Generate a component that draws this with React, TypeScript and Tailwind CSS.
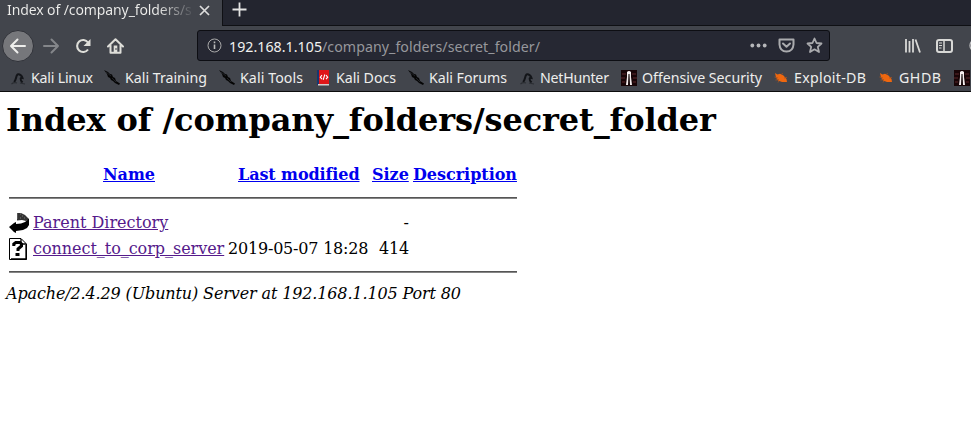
import React from "react";

const Kali = () => (
  <svg className="shrink-0" width="16" height="16" viewBox="0 0 16 16" fill="none">
    <path d="M4 12C6.5 10 5.5 6.5 7.5 4.5C9.5 3.5 12 6 12.5 8C10.5 7.5 9.5 9 12.5 12.5" stroke="#131519" strokeWidth="2" />
    <path d="M1.5 14Q4 12 7 13M10 13L15 14" stroke="#2a2d32" strokeWidth="1.2" />
  </svg>
);

const Knife = () => (
  <svg className="shrink-0" width="16" height="16" viewBox="0 0 16 16">
    <path d="M0 0L4 2L6 4L8 4.5L9 7L11 8L12 11L16 13.5L15 15L11 13L9 11L7 10L6 8L4 7L3 4Z" fill="#050505" />
    <path d="M2 2L7 6M8 8L12 12" stroke="#30343a" strokeWidth=".6" />
  </svg>
);

const Book = () => (
  <svg className="shrink-0" width="16" height="16" viewBox="0 0 16 16">
    <path d="M2 0H4V15H2Z" fill="#17366f" />
    <path d="M4 0H14V14H4Z" fill="#df1618" />
    <path d="M3 14H14V15.5H3Z" fill="#d3cccc" />
    <path d="M7 5.2L5.3 7.2L7 9.2M11 5.2L12.7 7.2L11 9.2M9.8 4.5L8.2 9.8" stroke="white" strokeWidth="1.1" fill="none" />
  </svg>
);

const Security = () => (
  <svg className="shrink-0" width="16" height="16" viewBox="0 0 16 16">
    <path d="M0 0H16V16H0Z" fill="#180507" />
    <path d="M1 4H5M11 4H15M0 8H4M12 8H16M1 12H4M12 12H15" stroke="#5c282c" strokeWidth="1" />
    <path d="M6 2Q8 0 10 2V7L11 15H9L8 4L7 15H5L6 7Z" fill="#f5eeee" />
    <path d="M8 4V15" stroke="#080000" strokeWidth="1" />
  </svg>
);

const Bug = () => (
  <svg className="shrink-0" width="16" height="16" viewBox="0 0 16 16">
    <path d="M2 3L4.5 4.5L7 3.8L10.5 5.5L13.5 9L14 12L9 12L5 10.5L3 7.5Z" fill="#ee670f" />
    <path d="M1.5 7L5 8M2.5 10L6 9.5M8 4.5L10 3.5M6 11L5 12.5M11 8L14 7.5" stroke="#a9531f" strokeWidth=".8" />
  </svg>
);

const bookmarks = [
  { label: "Kali Linux", icon: Kali, box: "w-[94px]", length: 62 },
  { label: "Kali Training", icon: Knife, box: "w-[115px]", length: 82 },
  { label: "Kali Tools", icon: Knife, box: "w-[96px]", length: 63 },
  { label: "Kali Docs", icon: Book, box: "w-[93px]", length: 60 },
  { label: "Kali Forums", icon: Knife, box: "w-[111px]", length: 78 },
  { label: "NetHunter", icon: Kali, box: "w-[102px]", length: 69 },
  { label: "Offensive Security", icon: Security, box: "w-[152px]", length: 120 },
  { label: "Exploit-DB", icon: Bug, box: "w-[105px]", length: 72 },
  { label: "GHDB", icon: Bug, box: "w-[76px]", length: 42 },
];

function Browser() {
  return (
    <header className="h-[92px] overflow-hidden border-b border-[#0c0c0d] bg-[#42454c] font-['Noto_Sans',sans-serif] text-[14.2px] text-[#eeeeec]">
      <div className="flex h-[26px]">
        <div className="flex h-[26px] w-[222px] shrink-0">
          <div className="ml-[7px] h-5 w-[186px] shrink-0 whitespace-nowrap bg-[linear-gradient(90deg,#eeeeec_0,#eeeeec_150px,#42454c_188px)] bg-clip-text text-[14px] leading-5 tracking-[-0.1px] text-transparent">Index of /company_folders/s</div>
          <svg className="ml-[6px] mt-[5px] shrink-0" width="11" height="11" viewBox="0 0 11 11"><path d="M1 1L10 10M10 1L1 10" stroke="#dddddc" strokeWidth="1.7" /></svg>
        </div>
        <div className="flex-1 border-b border-l border-[#0f1014] bg-[#23252f] pl-[9px] pt-[2px]">
          <svg width="15" height="15" viewBox="0 0 15 15"><path d="M7.5 .5V14.5M.5 7.5H14.5" stroke="#e4e4e3" strokeWidth="1.8" /></svg>
        </div>
      </div>
      <div className="flex h-[39px] items-center">
        <div className="ml-[2px] flex size-8 shrink-0 items-center justify-center rounded-full border border-[#303239] bg-[#76777b]">
          <svg width="18" height="18" viewBox="0 0 18 18" fill="none"><path d="M16 9H2M8.5 2.5L2 9L8.5 15.5" stroke="#eeeeec" strokeWidth="2" strokeLinecap="round" strokeLinejoin="round" /></svg>
        </div>
        <svg className="ml-[8px] shrink-0" width="18" height="18" viewBox="0 0 18 18" fill="none"><path d="M2 9H16M9.5 2.5L16 9L9.5 15.5" stroke="#84868a" strokeWidth="2" strokeLinecap="round" strokeLinejoin="round" /></svg>
        <svg className="ml-[15px] shrink-0" width="16" height="16" viewBox="0 0 16 16" fill="none"><path d="M13 4.5A6 6 0 1 0 13 11.5" stroke="#deded9" strokeWidth="2.1" /><path d="M15.5 1V8H8.5Z" fill="#deded9" /></svg>
        <svg className="ml-[16px] shrink-0" width="17" height="16" viewBox="0 0 17 16" fill="none"><path d="M1 8.5L8.5 1.3L16 8.5M3.5 7.5V14.8H13.5V7.5" stroke="#deded9" strokeWidth="2" strokeLinecap="round" strokeLinejoin="round" /><path d="M6.7 7.5H10.3V14H6.7Z" fill="#deded9" /><path d="M9 10V12" stroke="#42454c" /></svg>
        <div className="ml-[73px] flex h-[31px] w-[633px] shrink-0 items-center rounded-[3px] border border-[#0d0e13] bg-[#262833] pl-[9px]">
          <svg className="shrink-0" width="15" height="15" viewBox="0 0 15 15" fill="none"><circle cx="7.5" cy="7.5" r="6.5" stroke="#aaa" strokeWidth="1" /><path d="M7.5 6.5V11M7.5 3.5V5.3" stroke="#bbb" strokeWidth="1.6" /></svg>
          <svg className="ml-[7px] shrink-0 overflow-visible" width="312" height="24"><text x="0" y="18" fill="#f1f1ef" textLength="93" lengthAdjust="spacing">192.168.1.105</text><text x="93" y="18" fill="#96979c" textLength="218" lengthAdjust="spacing">/company_folders/secret_folder/</text></svg>
          <svg className="ml-[209px] shrink-0" width="17" height="5" fill="#b6b7ba"><circle cx="2.3" cy="2.5" r="1.9" /><circle cx="8.5" cy="2.5" r="1.9" /><circle cx="14.7" cy="2.5" r="1.9" /></svg>
          <svg className="ml-[11px] shrink-0" width="17" height="15" viewBox="0 0 17 15" fill="none" stroke="#aaabae" strokeWidth="2" strokeLinecap="round" strokeLinejoin="round"><path d="M1.5 1.5H15.5V6.5Q15 13.5 8.5 13.5Q2 13.5 1.5 6.5ZM5 5.5L8.5 8.8L12 5.5" /></svg>
          <svg className="ml-[11px] shrink-0" width="17" height="17" viewBox="0 0 17 17" fill="none"><path d="M8.5 1.5L10.5 6L15.5 6.5L11.8 9.9L13 15L8.5 12.3L4 15L5.2 9.9L1.5 6.5L6.5 6Z" stroke="#aaabae" strokeWidth="1.8" strokeLinejoin="round" /></svg>
        </div>
        <svg className="ml-[75px] shrink-0" width="16" height="14" viewBox="0 0 16 14" fill="none" stroke="#d8d8d6" strokeWidth="1.8"><path d="M1 0V13.5M4.5 2V13.5M8 0V13.5M10.5 .5L15 13.5" /></svg>
        <svg className="ml-[15px] shrink-0" width="17" height="14" viewBox="0 0 17 14" fill="none" stroke="#d8d8d6"><rect x="1" y="1" width="15" height="12" rx="2" strokeWidth="2" /><path d="M8 1V13" strokeWidth="1.5" /><path d="M3 4H6M3 6.5H6M3 9H5.5" /></svg>
        <svg className="ml-[16px] shrink-0" width="15" height="15" fill="none" stroke="#c0c1c3"><circle cx="7.5" cy="7.5" r="6.5" strokeWidth="1.3" /></svg>
      </div>
      <nav className="flex h-[26px] items-center pl-[10px]">
        {bookmarks.map(({ label, icon: Icon, box, length }) => (
          <div key={label} className={`flex shrink-0 items-center ${box}`}>
            <Icon />
            <svg className="ml-[5px] h-5 shrink-0 overflow-visible" width={length} fill="#eeeeec"><text x="0" y="15" textLength={length} lengthAdjust="spacing">{label}</text></svg>
          </div>
        ))}
        <Security />
      </nav>
    </header>
  );
}

const columns = "grid grid-cols-[24px_195px_144px_37px_104px]";
const rule = "h-[2px] w-[508px] border-t border-t-[#555] bg-[#858585]";

export default function App() {
  return (
    <div className="h-[421px] w-[971px] overflow-hidden bg-white">
      <Browser />
      <main className="pl-[6px] font-['DejaVu_Serif',serif] text-[16px] leading-5 text-black">
        <h1 className="pt-[8px] text-[32px] font-bold leading-10 tracking-[-0.11px]">Index of /company_folders/secret_folder</h1>
        <section className="ml-[3px] mt-[25px] w-[508px]">
          <div className={`${columns} font-bold tracking-[-0.03px] text-[#0000ee]`}>
            <span />
            <a className="ml-[70px] justify-self-start underline">Name</a>
            <a className="ml-[10px] whitespace-nowrap tracking-[-0.1px] underline">Last modified</a>
            <a className="underline">Size</a>
            <a className="ml-[4px] underline">Description</a>
          </div>
          <div className={`${rule} mt-[12px]`} />
          <div className={`${columns} mt-[14px] h-[22px]`}>
            <svg className="-mt-px" width="20" height="22" viewBox="0 0 20 22">
              <path d="M8 1H12L16 3L19 6L19.5 8L17 9L13 8L8 8.5Z" fill="#343434" />
              <path d="M8 2H9M8 4H9M8 6H9M11 2H12M13 4H14M11 6H12M15 6H16" stroke="#888" strokeWidth=".8" />
              <path d="M20 6V13L18 16L14 18L7 19V21L5 20L0 15L5 11L7 10V12L12 11.5L16 10L18.5 8Z" fill="#000" />
            </svg>
            <a className="text-[#551a8b] underline">Parent Directory</a><span />
            <span className="text-right">-</span>
          </div>
          <div className={`${columns} mt-[4px] h-[22px]`}>
            <svg className="-mt-px" width="18" height="22" viewBox="0 0 18 22" fill="none"><path d="M.5 .5H12L17.5 6V21.5H.5Z" fill="white" stroke="black" /><path d="M12 1V6H17M2 21H17V7" stroke="black" strokeWidth="1.3" /><path d="M4.8 8V6L6.8 4.5H10.8L12.5 6V8L9 11V13M6.5 16.5H10.5" stroke="black" strokeWidth="3" /></svg>
            <a className="tracking-[-0.04px] text-[#551a8b] underline">connect_to_corp_server</a>
            <span className="whitespace-nowrap tracking-[-0.2px]">2019-05-07 18:28</span>
            <span className="text-right tracking-[-0.18px]">414</span>
          </div>
          <div className={`${rule} mt-[10px]`} />
        </section>
        <address className="mt-[11px] italic tracking-[-0.13px]">Apache/2.4.29 (Ubuntu) Server at 192.168.1.105 Port 80</address>
      </main>
    </div>
  );
}
